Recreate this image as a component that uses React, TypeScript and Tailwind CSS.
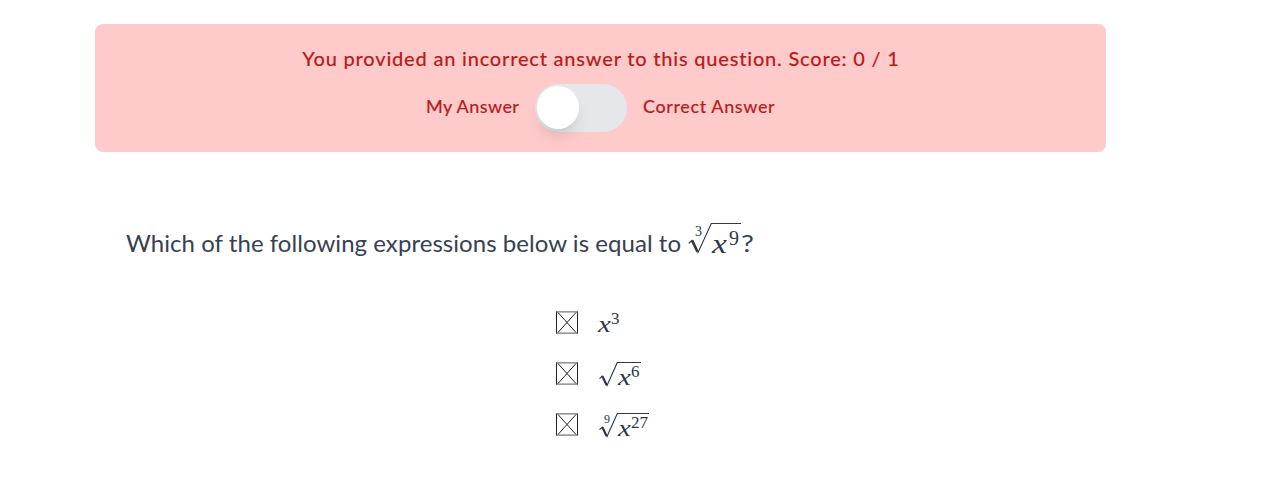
interface PowerProps {
  exponent: string;
  large?: boolean;
}

function Power({ exponent, large }: PowerProps) {
  return (
    <span className="inline-flex items-start font-['Liberation_Serif',serif] text-[#2d3748]">
      <i
        className={
          large
            ? "mt-[4px] w-[13px] origin-left scale-x-[1.2] text-[28px] leading-[26px]"
            : "mt-[3px] w-[11px] origin-left scale-x-[1.2] text-[24px] leading-[22px]"
        }
      >
        x
      </i>
      <span className={large ? "ml-[4px] mt-[2px] text-[20px] leading-[18px]" : "ml-[2px] mt-[1px] text-[17px] leading-[16px]"}>
        {exponent}
      </span>
    </span>
  );
}

interface RootProps extends PowerProps {
  index?: string;
}

function Root({ exponent, index, large }: RootProps) {
  return (
    <span className="relative inline-flex items-start text-[#2d3748]">
      {index && (
        <span
          className={
            large
              ? "absolute left-[7px] top-[3px] font-['Liberation_Serif',serif] text-[14px] leading-[12px]"
              : "absolute left-[5px] top-[0px] font-['Liberation_Serif',serif] text-[12px] leading-[12px]"
          }
        >
          {index}
        </span>
      )}
      {large ? (
        <svg width="24" height="32" viewBox="0 0 24 32" fill="none" stroke="currentColor">
          <path d="M.8 20.3l3.7-3.3" strokeWidth="1.2" />
          <path d="M4.1 17.4l5.4 11.4" strokeWidth="2.6" />
          <path d="M9.7 30.3L23.3.5H24" strokeWidth="1.1" />
        </svg>
      ) : (
        <svg width="19" height="26" viewBox="0 0 19 26" fill="none" stroke="currentColor">
          <path d="M.5 16.6l3.2-2.8" strokeWidth="1.2" />
          <path d="M3.4 14.2l4.2 8.8" strokeWidth="2.2" />
          <path d="M7.7 24.3L18.3.5H19" strokeWidth="1.1" />
        </svg>
      )}
      <span className={large ? "w-[29px] border-t border-current" : "border-t border-current pr-px"}>
        <Power exponent={exponent} large={large} />
      </span>
    </span>
  );
}

function CrossedBox() {
  return (
    <svg width="22" height="23" viewBox="0 0 22 23" fill="none" stroke="#222" strokeWidth="1">
      <path d="M.5.5v22M21.5.5v22" />
      <path d="M0 .9h22M0 22.1h22" stroke="#555" />
      <path d="M2 1.5l18 20M20 1.5l-18 20" />
    </svg>
  );
}

function ResultBanner() {
  return (
    <div className="h-32 w-[1011px] rounded-lg bg-[#fecaca] pt-5 text-[#b91c1c] [-webkit-text-stroke:0.1px]">
      <p className="pl-px text-center font-['Lato',sans-serif] text-[20px] leading-7 font-medium whitespace-nowrap">
        <span className="tracking-[0.8px]">You provided an incorrect answer to this question. Score: 0 / 1</span>
      </p>
      <div className="mt-3 flex items-center pl-[331px] font-['Lato',sans-serif] text-[18px] font-medium whitespace-nowrap">
        <span className="w-[94px] pb-[4px] tracking-[0.4px]">My Answer</span>
        <button
          type="button"
          aria-label="Show correct answer"
          className="ml-[15px] h-12 w-[92px] rounded-full bg-[#e5e7eb] pl-[2px]"
        >
          <span className="mb-[2px] block h-[43px] w-[42px] rounded-full bg-white shadow-lg" />
        </button>
        <span className="ml-4 pb-[4px] tracking-[0.6px]">Correct Answer</span>
      </div>
    </div>
  );
}

export default function App() {
  return (
    <main className="h-[489px] overflow-hidden bg-white pl-[95px] pt-6">
      <ResultBanner />
      <div className="mt-[71px] flex h-10 pl-[31px] font-['Lato',sans-serif] text-[24px] leading-[40px] whitespace-nowrap text-[#374151]">
        <span className="w-[562px] tracking-[0.05px]">Which of the following expressions below is equal to</span>
        <Root exponent="9" index="3" large />
        <span className="origin-left scale-x-[1.2]">?</span>
      </div>
      <div className="mt-[48px] flex flex-col gap-[19px] pl-[461px]">
        <div className="flex h-8 items-start">
          <CrossedBox />
          <div className="ml-5 -mt-[1px]"><Power exponent="3" /></div>
        </div>
        <div className="flex h-8 items-start">
          <CrossedBox />
          <div className="ml-[21px]"><Root exponent="6" /></div>
        </div>
        <div className="flex h-8 items-start">
          <CrossedBox />
          <div className="ml-[21px]"><Root exponent="27" index="9" /></div>
        </div>
      </div>
    </main>
  );
}
